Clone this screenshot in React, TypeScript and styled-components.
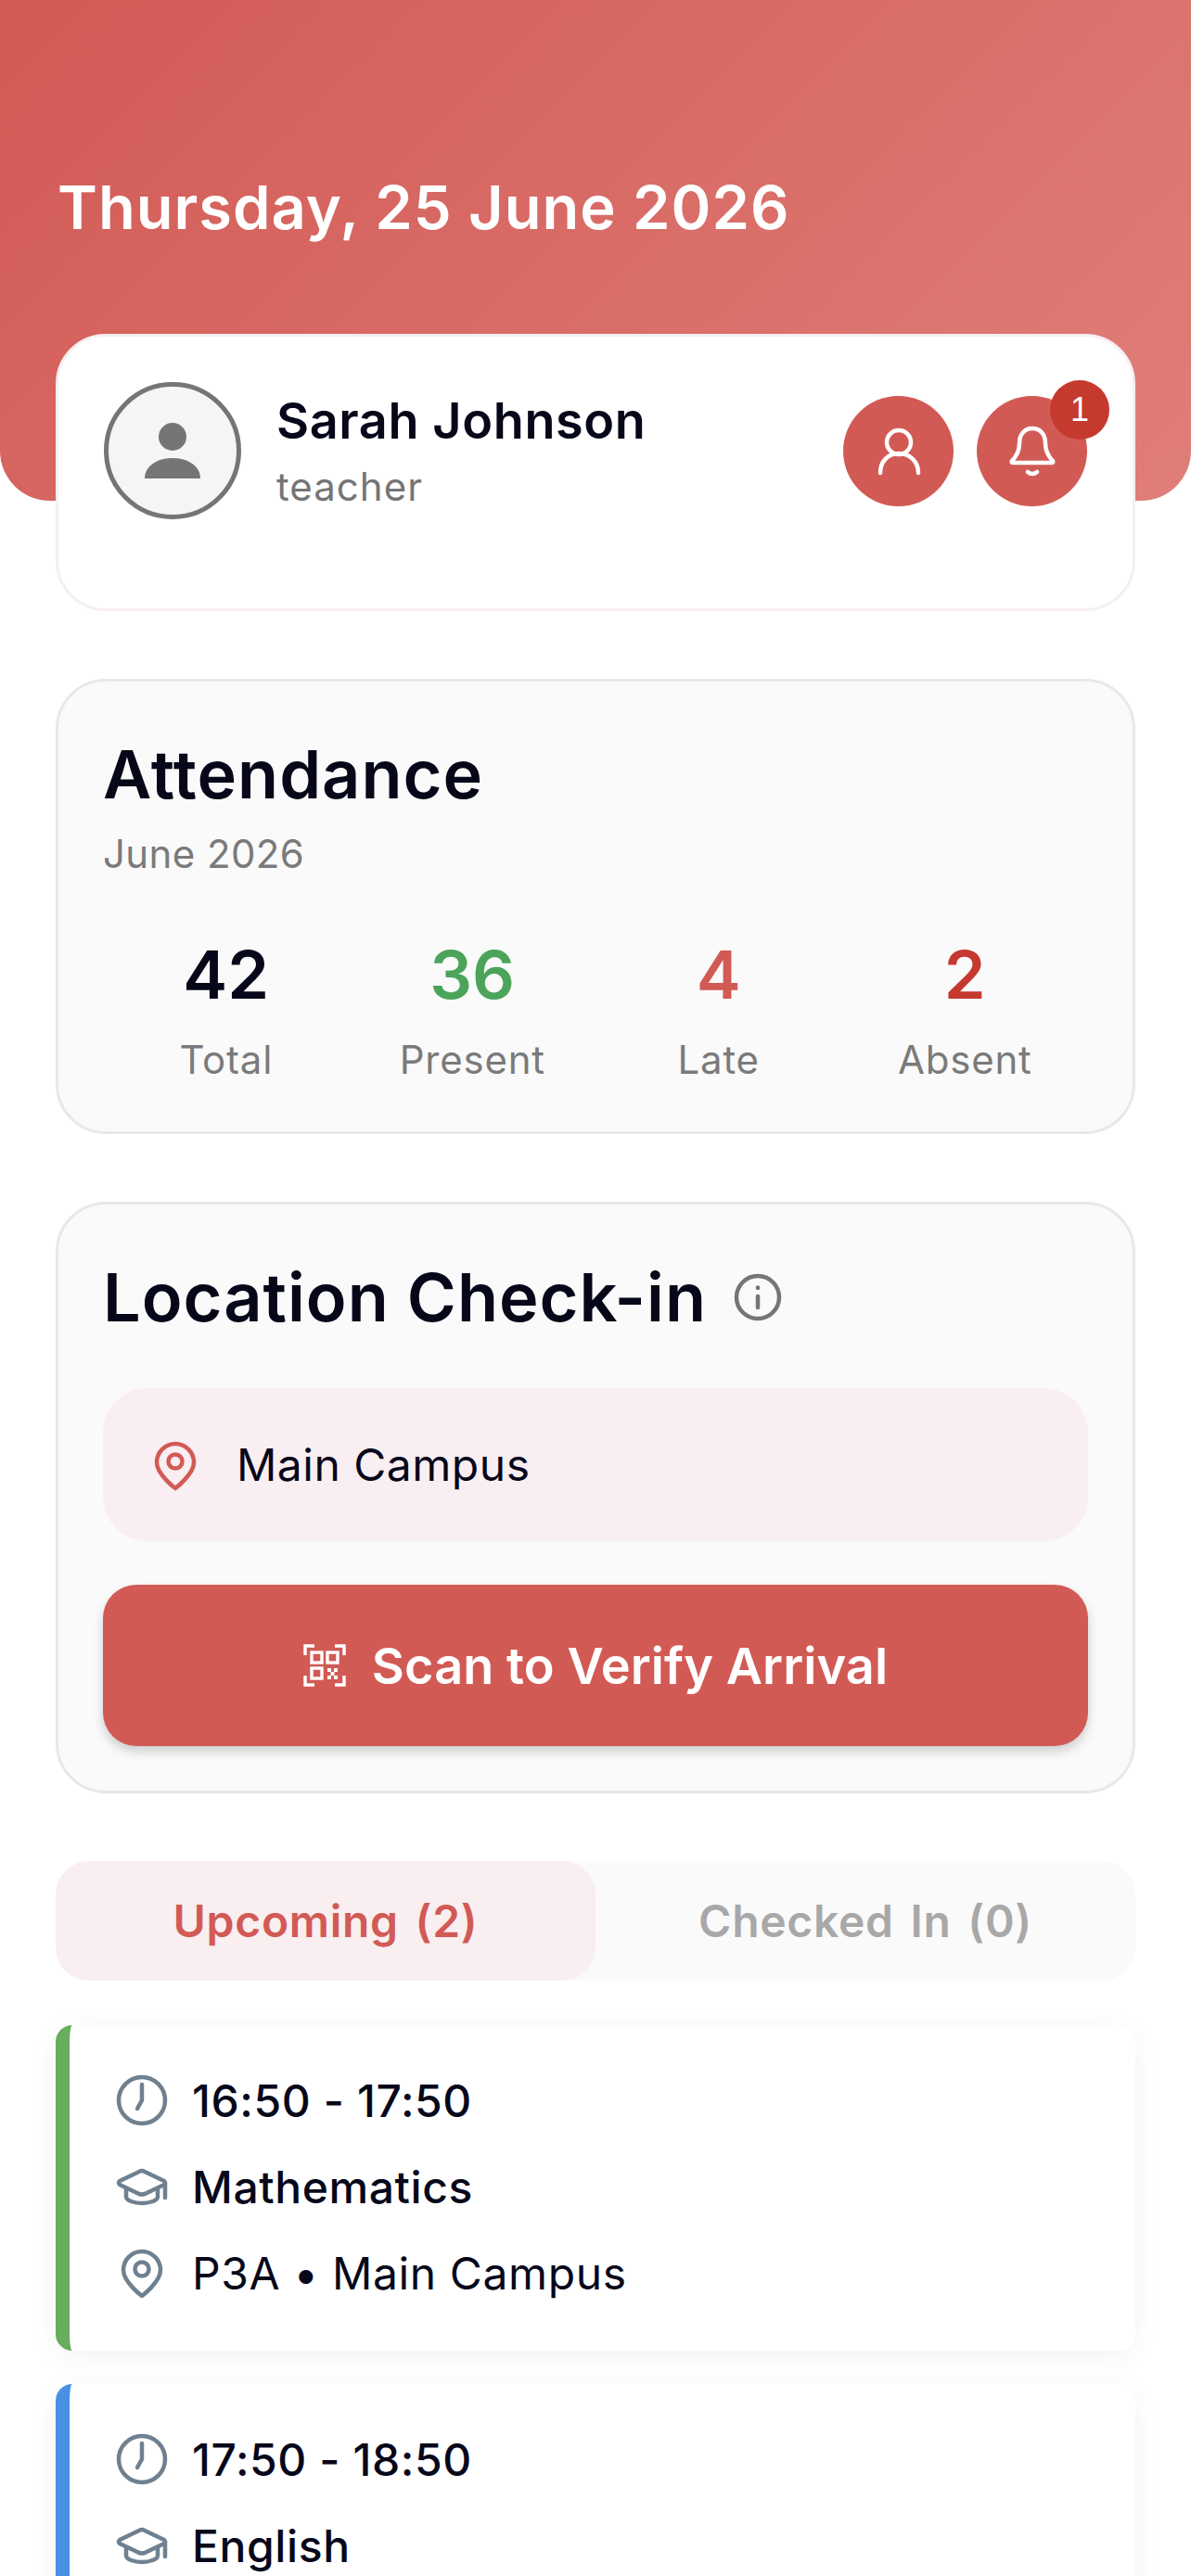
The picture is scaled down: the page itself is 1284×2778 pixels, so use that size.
import React from 'react';
import styled, {createGlobalStyle} from 'styled-components';

const GlobalStyle = createGlobalStyle`
  html, body {
    margin: 0;
    padding: 0;
    background: #fff;
  }
  body {
    font-family: Inter, "Liberation Sans", sans-serif;
    color: #07071a;
  }
`;

const Page = styled.div`
  width: 1284px;
  height: 2778px;
  overflow: hidden;
  background: #fff;
`;

const Header = styled.header`
  height: 540px;
  padding: 186px 62px 0;
  box-sizing: border-box;
  background: linear-gradient(135deg, #d25a55 0%, #e07e79 100%);
  border-radius: 0 0 54px 54px;
`;

const DateTitle = styled.h1`
  margin: 0;
  font-size: 65px;
  line-height: 76px;
  font-weight: 600;
  letter-spacing: 1px;
  color: #fff;
`;

const Content = styled.main`
  display: flex;
  flex-direction: column;
  padding: 0 60px;
  margin-top: -180px;
`;

const UserCard = styled.section`
  display: flex;
  align-items: center;
  gap: 38px;
  padding: 49px 49px 96px;
  background: #fff;
  border: 3px solid #f6eff1;
  border-radius: 54px;
  position: relative;
`;

const Avatar = styled.div`
  display: flex;
  align-items: center;
  justify-content: center;
  width: 148px;
  height: 148px;
  box-sizing: border-box;
  border: 5px solid #757575;
  border-radius: 50%;
  background: #f5f5f5;
  flex-shrink: 0;
`;

const UserText = styled.div`
  display: flex;
  flex-direction: column;
  gap: 14px;
  flex: 1;
`;

const UserName = styled.div`
  font-size: 54px;
  line-height: 64px;
  font-weight: 600;
  letter-spacing: 0.6px;
`;

const UserRole = styled.div`
  font-size: 42px;
  line-height: 50px;
  letter-spacing: 1px;
  color: #757575;
`;

const ActionRow = styled.div`
  display: flex;
  gap: 25px;
`;

const RoundButton = styled.button`
  position: relative;
  display: flex;
  align-items: center;
  justify-content: center;
  width: 119px;
  height: 119px;
  padding: 0;
  border: none;
  border-radius: 50%;
  background: #d25a55;
`;

const Badge = styled.span`
  position: absolute;
  top: -17px;
  right: -24px;
  display: flex;
  align-items: center;
  justify-content: center;
  width: 64px;
  height: 64px;
  border-radius: 50%;
  background: #c5392f;
  color: #fff;
  font-family: inherit;
  font-size: 36px;
  font-weight: 500;
`;

const Panel = styled.section`
  margin-top: 73px;
  padding: 48px;
  background: #fafafa;
  border: 3px solid #e8e8e8;
  border-radius: 54px;
`;

const PanelTitle = styled.h2`
  display: flex;
  align-items: center;
  gap: 25px;
  margin: 0;
  font-size: 72px;
  line-height: 104px;
  font-weight: 600;
  letter-spacing: 1px;
`;

const PanelSub = styled.div`
  margin-top: 9px;
  font-size: 42px;
  line-height: 50px;
  letter-spacing: 0.4px;
  color: #7a7a7a;
`;

const StatGrid = styled.div`
  display: grid;
  grid-template-columns: repeat(4, 1fr);
  margin-top: 62px;
`;

const Stat = styled.div`
  display: flex;
  flex-direction: column;
  align-items: center;
  gap: 20px;
`;

const StatValue = styled.div<{$color: string}>`
  font-size: 72px;
  line-height: 86px;
  font-weight: 600;
  color: ${p => p.$color};
`;

const StatLabel = styled.div`
  font-size: 42px;
  line-height: 58px;
  letter-spacing: 0.8px;
  color: #7a7a7a;
`;

const LocationRow = styled.div`
  display: flex;
  align-items: center;
  gap: 36px;
  height: 165px;
  margin-top: 46px;
  padding: 0 48px;
  box-sizing: border-box;
  background: #f9eef1;
  border-radius: 48px;
  font-size: 48px;
  letter-spacing: 0.5px;
`;

const ScanButton = styled.button`
  display: flex;
  align-items: center;
  justify-content: center;
  gap: 28px;
  width: 100%;
  height: 174px;
  margin-top: 47px;
  padding: 0;
  border: none;
  border-radius: 36px;
  background: #d25a55;
  box-shadow: 0 6px 12px rgba(0, 0, 0, 0.18);
  color: #fff;
  font-family: inherit;
  font-size: 54px;
  font-weight: 600;
  letter-spacing: 0.1px;
`;

const Tabs = styled.div`
  display: grid;
  grid-template-columns: 582px 1fr;
  height: 129px;
  margin-top: 73px;
  background: #fafafa;
  border-radius: 36px;
`;

const Tab = styled.div<{$active?: boolean}>`
  display: flex;
  align-items: center;
  justify-content: center;
  padding-bottom: 1px;
  border-radius: 36px;
  font-size: 48px;
  font-weight: 600;
  letter-spacing: 0.7px;
  word-spacing: 5px;
  background: ${p => (p.$active ? '#f9eef0' : 'transparent')};
  color: ${p => (p.$active ? '#d25a55' : '#a8a8a8')};
`;

const ClassList = styled.div`
  display: flex;
  flex-direction: column;
  gap: 36px;
  margin-top: 48px;
`;

const ClassCard = styled.article<{$accent: string}>`
  display: flex;
  flex-direction: column;
  gap: 33px;
  padding: 51px 48px 54px;
  background: #fff;
  border-left: 15px solid ${p => p.$accent};
  border-radius: 18px;
  box-shadow: 0 6px 30px rgba(0, 0, 0, 0.05);
`;

const ClassRow = styled.div<{$weight?: number}>`
  display: flex;
  align-items: center;
  gap: 24px;
  height: 60px;
  font-size: 48px;
  font-weight: ${p => p.$weight ?? 400};
  letter-spacing: 0.6px;
`;

const Icon = styled.svg<{$color: string}>`
  width: 60px;
  height: 60px;
  flex-shrink: 0;
  fill: none;
  stroke: ${p => p.$color};
  stroke-width: 4.5;
  stroke-linecap: round;
  stroke-linejoin: round;
`;

const SLATE = '#6f8090';

const ClockIcon = () => (
    <Icon $color={SLATE} viewBox="0 0 60 60">
        <circle cx="30" cy="30" r="25" />
        <path d="M30 13V30L25 39" />
    </Icon>
);

const HatIcon = () => (
    <Icon $color={SLATE} viewBox="0 0 60 60">
        <path d="M27 14L6 24Q4 26 6 28L27 38Q30 39 33 38L54 28Q56 26 54 24L33 14Q30 12 27 14Z" />
        <path d="M13 32V41C13 45 22 48 30 48C38 48 47 45 47 41V32" />
        <path d="M55 26V42" />
    </Icon>
);

const PinIcon = ({color}: {color: string}) => (
    <Icon $color={color} viewBox="0 0 60 60">
        <path d="M30 55C30 55 10 40 10 27A20 20 0 0 1 50 27C50 40 30 55 30 55Z" />
        <circle cx="30" cy="26" r="7.5" />
    </Icon>
);

const InfoIcon = () => (
    <Icon $color="#757575" viewBox="0 0 60 60">
        <circle cx="30" cy="30" r="23" />
        <path d="M30 29V41" />
        <path d="M30 19.5V20" />
    </Icon>
);

const UserIcon = () => (
    <Icon $color="#fff" viewBox="0 0 60 60">
        <circle cx="30" cy="21" r="13" />
        <path d="M10 54C10 41 19 33 30 33C41 33 51 41 51 54" />
    </Icon>
);

const BellIcon = () => (
    <Icon $color="#fff" viewBox="0 0 60 60">
        <path d="M30 6C21 6 16 13 16 22C16 31 13 36 8 41Q7 43 9 43H51Q53 43 52 41C47 36 44 31 44 22C44 13 39 6 30 6Z" />
        <path d="M25 53Q30 57 35 53" />
    </Icon>
);

const QrIcon = () => (
    <svg width="46" height="46" viewBox="0 0 46 46" fill="none" stroke="#fff" strokeWidth="3.4">
        <path d="M12 2H2V12M34 2H44V12M12 44H2V34M34 44H44V34" />
        <rect x="9" y="9" width="11" height="11" />
        <rect x="26" y="9" width="11" height="11" />
        <rect x="9" y="26" width="11" height="11" />
        <path d="M26 26h4v4h-4zM33 26h4v4h-4zM29.5 30h4v4h-4zM26 34h4v4h-4zM33 34h4v4h-4z" fill="#fff" stroke="none" />
    </svg>
);

const PersonGlyph = () => (
    <svg width="60" height="60" viewBox="0 0 60 60" fill="#757575">
        <circle cx="30" cy="15" r="15" />
        <path d="M0 60C0 46 14 38 30 38C46 38 60 46 60 60Z" />
    </svg>
);

const stats = [
    {label: 'Total', value: '42', color: '#07071a'},
    {label: 'Present', value: '36', color: '#4ca45a'},
    {label: 'Late', value: '4', color: '#d25a55'},
    {label: 'Absent', value: '2', color: '#c5392f'},
];

const App = () => {
    return (
        <Page>
            <GlobalStyle />
            <Header>
                <DateTitle>Thursday, 25 June 2026</DateTitle>
            </Header>
            <Content>
                <UserCard>
                    <Avatar><PersonGlyph /></Avatar>
                    <UserText>
                        <UserName>Sarah Johnson</UserName>
                        <UserRole>teacher</UserRole>
                    </UserText>
                    <ActionRow>
                        <RoundButton><UserIcon /></RoundButton>
                        <RoundButton>
                            <BellIcon />
                            <Badge>1</Badge>
                        </RoundButton>
                    </ActionRow>
                </UserCard>

                <Panel>
                    <PanelTitle>Attendance</PanelTitle>
                    <PanelSub>June 2026</PanelSub>
                    <StatGrid>
                        {stats.map(s => (
                            <Stat key={s.label}>
                                <StatValue $color={s.color}>{s.value}</StatValue>
                                <StatLabel>{s.label}</StatLabel>
                            </Stat>
                        ))}
                    </StatGrid>
                </Panel>

                <Panel>
                    <PanelTitle>Location Check-in <InfoIcon /></PanelTitle>
                    <LocationRow>
                        <PinIcon color="#d25a55" />
                        Main Campus
                    </LocationRow>
                    <ScanButton><QrIcon />Scan to Verify Arrival</ScanButton>
                </Panel>

                <Tabs>
                    <Tab $active>Upcoming (2)</Tab>
                    <Tab>Checked In (0)</Tab>
                </Tabs>

                <ClassList>
                    <ClassCard $accent="#66ad5c">
                        <ClassRow $weight={500}><ClockIcon />16:50 - 17:50</ClassRow>
                        <ClassRow $weight={500}><HatIcon />Mathematics</ClassRow>
                        <ClassRow><PinIcon color={SLATE} />P3A • Main Campus</ClassRow>
                    </ClassCard>
                    <ClassCard $accent="#4a90e2">
                        <ClassRow $weight={500}><ClockIcon />17:50 - 18:50</ClassRow>
                        <ClassRow $weight={500}><HatIcon />English</ClassRow>
                    </ClassCard>
                </ClassList>
            </Content>
        </Page>
    );
};

export default App;
